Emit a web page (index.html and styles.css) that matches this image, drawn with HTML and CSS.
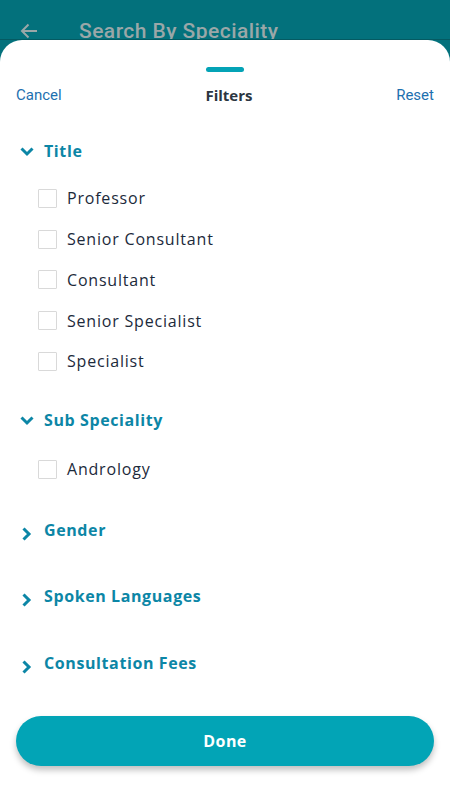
FILE: index.html
```html
<!DOCTYPE html>
<html lang="en">
<head>
<meta charset="utf-8">
<title>Filters</title>
<link rel="stylesheet" href="styles.css">
</head>
<body>
<div class="appbar">
  <svg class="back" width="18" height="16" viewBox="0 0 18 16"><path d="M17 8H2M8.5 1.5L2 8l6.5 6.5" fill="none" stroke="#9aa7a8" stroke-width="2"/></svg>
  <span class="appbar-title">Search By Speciality</span>
</div>
<div class="sheet">
  <div class="handle"></div>
  <div class="nav">
    <span class="link">Cancel</span>
    <span class="nav-title">Filters</span>
    <span class="link">Reset</span>
  </div>

  <div class="section open first">
    <div class="head">
      <svg class="chev-down" width="14" height="10" viewBox="0 0 14 10"><path d="M1.5 1.5L7 7l5.5-5.5" fill="none" stroke="#0c86a6" stroke-width="3"/></svg>
      <span>Title</span>
    </div>
    <ul class="items">
      <li><span class="box"></span>Professor</li>
      <li><span class="box"></span>Senior Consultant</li>
      <li><span class="box"></span>Consultant</li>
      <li><span class="box"></span>Senior Specialist</li>
      <li><span class="box"></span>Specialist</li>
    </ul>
  </div>

  <div class="section open second">
    <div class="head">
      <svg class="chev-down" width="14" height="10" viewBox="0 0 14 10"><path d="M1.5 1.5L7 7l5.5-5.5" fill="none" stroke="#0c86a6" stroke-width="3"/></svg>
      <span>Sub Speciality</span>
    </div>
    <ul class="items">
      <li><span class="box"></span>Andrology</li>
    </ul>
  </div>

  <div class="section">
    <div class="head">
      <svg class="chev-right" width="10" height="14" viewBox="0 0 10 14"><path d="M1.5 1.5L7 7l-5.5 5.5" fill="none" stroke="#0c86a6" stroke-width="3"/></svg>
      <span>Gender</span>
    </div>
  </div>
  <div class="section">
    <div class="head">
      <svg class="chev-right" width="10" height="14" viewBox="0 0 10 14"><path d="M1.5 1.5L7 7l-5.5 5.5" fill="none" stroke="#0c86a6" stroke-width="3"/></svg>
      <span>Spoken Languages</span>
    </div>
  </div>
  <div class="section">
    <div class="head">
      <svg class="chev-right" width="10" height="14" viewBox="0 0 10 14"><path d="M1.5 1.5L7 7l-5.5 5.5" fill="none" stroke="#0c86a6" stroke-width="3"/></svg>
      <span>Consultation Fees</span>
    </div>
  </div>

  <div class="done">Done</div>
</div>
</body>
</html>
```
FILE: styles.css
```css
* { box-sizing: border-box; }
html, body {
  margin: 0;
  padding: 0;
  width: 450px;
  height: 800px;
  overflow: hidden;
  background: #03717c;
  font-family: "Open Sans", "Noto Sans", sans-serif;
}
.appbar {
  height: 40px;
  overflow: hidden;
  display: flex;
  align-items: flex-start;
  padding-top: 16px;
  background: #03717c;
  border-bottom: 1px solid #045a62;
}
.back {
  margin: 7px 0 0 20px;
  flex: none;
}
.appbar-title {
  margin-left: 41px;
  font-family: Roboto, sans-serif;
  font-size: 21px;
  font-weight: 500;
  line-height: 30px;
  letter-spacing: 0.45px;
  color: #9aa7a8;
}
.sheet {
  height: 760px;
  background: #fff;
  border-radius: 22px 22px 0 0;
  display: flex;
  flex-direction: column;
}
.handle {
  width: 38px;
  height: 5px;
  border-radius: 3px;
  background: #04a3b6;
  margin: 27px auto 0;
  flex: none;
}
.nav {
  height: 30px;
  margin-top: 8px;
  padding: 0 16px;
  display: flex;
  align-items: center;
  justify-content: space-between;
  flex: none;
}
.link {
  font-family: Roboto, sans-serif;
  font-size: 15px;
  color: #1d70af;
}
.nav-title {
  font-size: 15px;
  font-weight: 700;
  color: #2b3541;
}
.section {
  padding: 0 20px 36.5px;
  flex: none;
}
.section.first { margin-top: 26px; padding-bottom: 23px; }
.section.second { padding-bottom: 25px; }
.head {
  height: 30px;
  display: flex;
  align-items: center;
  font-size: 16px;
  font-weight: 700;
  color: #0c86a6;
  letter-spacing: 0.6px;
}
.head svg { flex: none; }
.chev-down { margin-right: 10px; margin-top: 2px; }
.chev-right { margin-left: 2px; margin-right: 12px; margin-top: 8px; }
.items {
  list-style: none;
  margin: 12px 0 0;
  padding: 0 0 0 18px;
}
.second .items { margin-top: 14px; }
.items li {
  height: 40.75px;
  display: flex;
  align-items: center;
  font-size: 16px;
  letter-spacing: 0.8px;
  color: #1c2a3b;
}
.box {
  width: 19px;
  height: 19px;
  border: 1.5px solid #d9d9d9;
  border-radius: 1px;
  margin-right: 10px;
  flex: none;
}
.done {
  margin: auto 16px 34px;
  height: 50px;
  border-radius: 25px;
  background: #02a4b6;
  color: #fff;
  font-size: 16px;
  font-weight: 700;
  letter-spacing: 0.4px;
  display: flex;
  align-items: center;
  justify-content: center;
  box-shadow: 0 4px 6px rgba(0, 0, 0, 0.25);
  flex: none;
}
```
